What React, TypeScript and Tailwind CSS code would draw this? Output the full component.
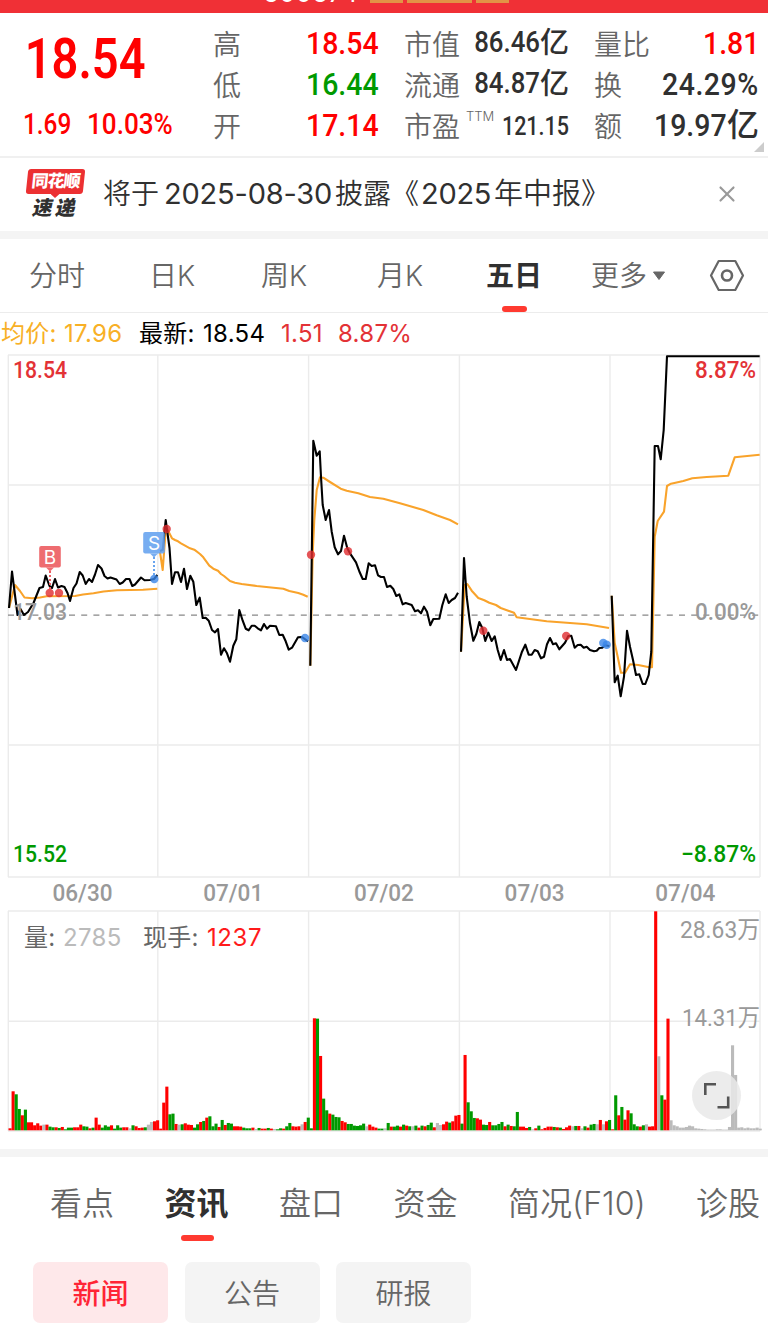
import { X } from 'lucide-react'
import clsx from 'clsx'

type LabelProps = {
  x: number
  y: number
  width: number
  fill: string
  children: string
  weight?: number
}

const GRID_X = [8.3, 157.8, 308.6, 459.4, 610, 760]

// One price line and one average line per trading day
const PRICE_LINES = [
  '9,608 12,571.5 17.5,615 20.5,609 24,615 28,612 33.5,603 39.5,588 43,587 45.7,575.5 49.5,586 52,588 55,579 58,587.5 61.5,586 64.5,587 67.5,593 70,601 73.5,588 76.5,583.5 79.7,572 82.7,575.5 85.7,584 89,579 92,582 95,574.5 98,565 101.5,568.5 104.5,576 107.5,578.5 110.5,577.5 116.5,579.5 119.7,584 122.7,582.5 126,579 129.5,579 132.3,586 135,584.5 141,577.5 144.5,580.3 150,580 154,579 157.3,575',
  '160,551 162.7,550 165.7,520 169.5,548 172,584 175,572.3 178,572.3 181,582 184,568.7 187,589 190.3,575.7 193.3,581.7 196.3,605 199.7,597.7 202.7,618 205.7,617.7 208.7,620.7 212,630 215,632.3 218,629 221,654.7 224,648.3 227,653.3 230,661.7 233.3,645.7 236.3,639.3 239.3,610 242.7,620.7 245.7,628.7 248.7,630.3 251.7,625.7 254.7,625.7 257.7,628.3 261,630.3 264,624 267,628.7 270,625.7 276,626.3 279.3,635 282.7,634.7 285.7,641.3 288.7,649.7 292,647.7 298,637.3 302,637 308,641.3',
  '310.3,665.7 313.3,440.7 316.7,455.7 319.7,451.3 321,476.7 322.7,505 325.7,520 329,510 331.7,531.7 334.7,547.3 338,554.3 341,551 344,535.7 347.3,548.3 350,553.3 356,562.3 359.7,572.3 362.7,579 365.7,579 368.7,563.3 371.7,566 375,565.3 378,575.3 381,577 384,577 387,587 390.3,585.7 393.3,589 396.3,596 399.3,594.3 402.7,604.3 405.7,603 411.7,605 415,611.3 418,610.3 421,613.3 424,606.7 427,611.7 430.3,625.3 433.3,619 439.3,618.7 442.3,605.3 445.7,594.3 448.7,603 451.7,600 455,598 458,592.7',
  '461,651.7 464,558 466.7,596.7 470,623.3 473.3,640.7 476.3,634 479.3,622 482.3,628 485.3,641 488.3,632.7 491.7,641 494.7,636.3 497.7,650 500.7,660 504,650 507,660 510,659 516,670 522,651.7 525.3,644.7 528.7,654.7 531.7,654.7 534.7,650 537.7,651.3 541,658.3 544,656.7 547,644.3 550,638 553,644.3 556,643.3 559.3,649.3 565,642.7 568.3,636 571.3,635.7 574.7,647.7 577.7,645 580.7,644.7 583.7,647.7 586.7,646.7 590,650 594,651.3 596.7,650.7 599.3,648 602.3,647.7 605,645.3 609.3,646',
  '611.7,595.7 614.7,682.3 617.7,675.7 620.7,696.3 624,676.7 627,630.7 630,646.7 633,660 636,675 639.3,674.3 642.7,684 645.3,684 648.7,675 651.3,651.7 654.7,446 658,446 660.7,459.3 663.7,430 667,356.3 759.7,356.3',
]

const AVERAGE_LINES = [
  '9,608 15,585 20,591 24.5,597.5 32,598.3 40,597.5 46.7,596.3 75,596 83,594.5 93.5,593.3 103.5,591.5 117,590.3 143,589.7 157.3,588.7',
  '160,552 162.7,570 165.7,530 167.7,530 172,538.3 175,540 178,541.3 181,543.3 190,548.3 194.3,549.7 200,554 203.3,557.3 209.3,565.7 213.3,568.7 218,570.7 221,574 224,576 230,581 235,582.7 241.7,584 256.7,586 283.3,588.7 289.3,591 298.3,593 303.3,594.7 307.7,596.7',
  '310.3,665.7 312.7,553 314.3,520 316.7,490 320,477.3 323.3,477.7 330,482 340.7,488.7 346.7,490.7 358.3,493.3 370,497 383.3,498.7 400,503.3 423.3,510 436.7,515.3 450,520 458,524.3',
  '461,651.7 464.7,585 467.3,584 471.7,590.7 478.3,598 484.3,600.3 489.3,602.7 496,605 500.7,608 514,612.7 516.7,617.3 546.7,621.3 586.7,624.3 609,628',
  '611.7,595.7 614.7,643 618,658.3 621,672.7 625,672.7 630,664.3 638.3,665 649.3,667.3 652,667.3 654.7,536.7 657.7,521 664,511.7 667,486 671,483.7 683.3,481 692.3,478.3 706.7,477 728.3,475.7 734.7,457.3 759.7,454.7',
]

const BUY_DOTS = [[49.7, 593], [59, 593], [166.7, 529], [311, 554.7], [348, 551.3], [483.3, 630.7], [566.2, 636]]
const SELL_DOTS = [[154.3, 579], [305, 638], [603.3, 643], [606.7, 644.8]]

// 49 five-minute bars a day: r = up, g = down, n = flat, followed by the volume
const VOLUMES = [
  'r6 r117 g108 g64 r45 g62 r24 r24 r15 r21 r14 n17 r17 g11 g9 r9 g7 r10 g3 g8 g8 r9 r9 r17 g12 g11 r6 g8 r38 r17 g8 g15 g11 r15 g5 g15 g8 r9 r9 n6 g15 r12 r7 r8 g9 n17 n25 r27 r30',
  'r5 r83 r131 g48 g50 r19 n17 g18 r21 r17 r16 g8 g18 r25 g28 r38 g42 g12 g20 r10 g31 r16 g22 g20 r12 r12 r11 g8 g6 g6 r8 n4 g7 r5 r5 g7 r5 n4 g3 g6 r5 g12 g22 r12 r11 r12 n18 r25 g38',
  'g6 r336 g335 r223 g95 g60 r50 g47 g40 g39 r28 r24 g19 g19 g14 g13 g15 g20 n12 r17 r11 r8 g5 g5 n6 g22 r11 g11 g14 r11 g17 r14 g12 n12 g14 r8 g14 r12 g16 g23 r9 n22 n16 r18 r26 g23 r27 r44 r46',
  'g20 r226 g84 g57 g37 r36 r32 g17 g16 r25 g15 g15 g19 g25 r12 g17 r13 g12 g55 r11 r11 r7 g10 n3 r6 g14 r3 r7 r11 r11 g10 r9 g8 r4 r9 r14 n12 g13 r13 n6 g12 r8 g17 g19 n18 r31 n18 r27 g31',
  'r3 g105 r45 g70 r32 r60 g51 g18 g12 r11 g15 n18 r11 r12 r657 n222 g105 r92 r335 n30 n15 n12 n8 n8 n10 n14 n12 n6 n5 n4 n3 n2 n2 n2 n3 n3 n2 n2 n10 n255 n166 n8 n9 n6 n8 n6 n6 n8 n5',
]

const BAR_COLORS: Record<string, string> = { r: '#ff0000', g: '#009900', n: '#bbbbbb' }

const KLINE_TABS = [
  { label: '分时', className: 'w-[120px]' },
  { label: '日K', className: 'w-[112px]' },
  { label: '周K', className: 'w-[116px]' },
  { label: '月K', className: 'w-[109px]' },
  { label: '五日', className: 'w-[105px]', active: true },
]

const INFO_TABS = ['看点', '资讯', '盘口', '资金', '简况(F10)', '诊股']
const NEWS_TYPES = ['新闻', '公告', '研报']

export default function App() {
  return (
    <div className="w-[768px] h-[1336px] overflow-hidden bg-white flex flex-col font-['Inter','Noto_Sans_CJK_SC',sans-serif] text-[#666]">
      <TopBar />
      <QuoteSummary />
      <NoticeBar />
      <div className="h-2 shrink-0 bg-[#f4f4f4]" />
      <KlineTabs />
      <div className="h-[41px] shrink-0 flex items-center pl-px text-[24px] tracking-[0.3px] whitespace-nowrap text-[#e33236]">
        <span className="w-[63px] text-[#f8b026]">均价:</span>
        <span className="w-[75px] text-[#f8b026]">17.96</span>
        <span className="w-[64px] text-black">最新:</span>
        <span className="w-[78px] text-black">18.54</span>
        <span className="w-[57px]">1.51</span>
        <span>8.87%</span>
      </div>
      <PriceChart />
      <VolumeChart />
      <div className="h-2 shrink-0 bg-[#f4f4f4]" />
      <InfoSection />
    </div>
  )
}

function TopBar() {
  return (
    <div className="h-[13px] shrink-0 bg-[#f03036] flex items-start pl-[263px] overflow-hidden">
      <span className="w-[107px] -mt-[20px] text-[26px] leading-[26px] text-white">600674</span>
      <div className="flex gap-1">
        <div className="w-[33px] h-[3px] bg-[#e29446]" />
        <div className="w-[65px] h-[3px] bg-[#e29446]" />
        <div className="w-[33px] h-[3px] bg-[#e29446]" />
      </div>
    </div>
  )
}

function QuoteSummary() {
  return (
    <div className="relative h-[145px] shrink-0 border-b-2 border-[#f0f0f0] flex pt-[11px] text-[28px] font-[350] whitespace-nowrap">
      <div className="w-[213px] pl-[23px] font-['Roboto',sans-serif] text-[#ff0000]">
        <div className="h-[73px] pl-[2px] text-[55px] leading-[71px] font-semibold origin-left scale-x-[0.855]">18.54</div>
        <div className="flex h-[56px] items-center text-[29px] font-medium">
          <span className="w-[64px] origin-left scale-x-[0.84]">1.69</span>
          <span className="origin-left scale-x-[0.9]">10.03%</span>
        </div>
      </div>

      <div className="w-[166px] mr-[25px]">
        <QuoteRow label="高" value="18.54" className="text-[#ff0000] text-[32px]" />
        <QuoteRow label="低" value="16.44" className="text-[#009900] text-[32px]" />
        <QuoteRow label="开" value="17.14" className="text-[#ff0000] text-[32px]" />
      </div>

      <div className="w-[165px] mr-[25px]">
        <QuoteRow label="市值" value="86.46" unit="亿" className="text-[#303030] text-[29px]" />
        <QuoteRow label="流通" value="84.87" unit="亿" className="text-[#303030] text-[29px]" />
        <div className="h-[41px] flex items-center pt-px">
          <span>市盈</span>
          <span className="w-[30px] pl-[6px] pb-[22px] text-[13px] leading-none">TTM</span>
          <div className="flex-1 w-0 flex justify-end font-['Roboto',sans-serif] font-medium text-[25px] text-[#303030]">
            <span className="origin-right scale-x-[0.86]">121.15</span>
          </div>
        </div>
      </div>

      <div className="w-[165px]">
        <QuoteRow label="量比" value="1.81" className="text-[#ff0000] text-[32px]" />
        <QuoteRow label="换" value="24.29%" className="text-[#303030] text-[32px] tracking-[0.6px]" />
        <QuoteRow label="额" value="19.97" unit="亿" className="text-[#303030] text-[32px]" />
      </div>

      <div className="absolute right-[4px] bottom-[4px] w-[10px] h-[10px] bg-[#ccc] [clip-path:polygon(100%_0,100%_100%,0_100%)]" />
    </div>
  )
}

function QuoteRow({ label, value, unit, className }: { label: string; value: string; unit?: string; className: string }) {
  return (
    <div className="h-[41px] flex items-center">
      <span>{label}</span>
      <div className={clsx('flex-1 w-0 flex items-center justify-end font-medium pb-[4px]', className)}>
        <span className="font-['Roboto',sans-serif] origin-right scale-x-[0.89]">{value}</span>
        {unit && <span className="leading-none">{unit}</span>}
      </div>
    </div>
  )
}

function NoticeBar() {
  return (
    <div className="h-[73px] shrink-0 flex items-center pb-px text-[29px] text-[#303030] whitespace-nowrap">
      <div className="w-[103px] pl-[25px]">
        <div className="w-[60px] flex flex-col items-center font-black">
          <div className="w-[57px] h-[25px] -skew-x-6 rounded-[3px] bg-[#ec3032] text-white text-[17px] leading-[24px] tracking-[-1px] text-center">
            同花顺
          </div>
          <div className="w-[9px] h-[4px] bg-[#ec3032] [clip-path:polygon(0_0,100%_0,50%_100%)]" />
          <div className="-skew-x-12 text-[20px] leading-[21px] tracking-[3px] pl-[2px]">速递</div>
        </div>
      </div>
      <span className="w-[61px] text-[28px] font-[350]">将于</span>
      <span className="w-[171px] tracking-[-0.2px]">2025-08-30</span>
      <span className="w-[86px] text-[28px] font-[350]">披露《</span>
      <span className="w-[73px] tracking-[-0.3px]">2025</span>
      <span className="flex-1 text-[29px] font-[350]">年中报》</span>
      <X size={26} strokeWidth={2} className="mr-[28px] text-[#999]" />
    </div>
  )
}

function KlineTabs() {
  return (
    <div className="h-[74px] shrink-0 border-b border-[#ececec] flex items-center pl-[29px] text-[28px] font-[350] whitespace-nowrap">
      {KLINE_TABS.map((tab) => (
        <div key={tab.label} className={clsx('h-full flex items-center', tab.className)}>
          <div className={clsx('relative h-full flex items-center pt-px', tab.active && 'font-bold text-[#303030]')}>
            {tab.label}
            {tab.active && (
              <div className="absolute bottom-0 left-[16px] w-[25px] h-[6px] rounded-full bg-[#ff3a30]" />
            )}
          </div>
        </div>
      ))}
      <div className="w-[118px] flex items-center pt-px">
        更多
        <svg width="14" height="10" viewBox="0 0 14 10" className="ml-[5px]">
          <path d="M1.5 1H12.5L7 8.5Z" fill="#666" stroke="#666" strokeLinejoin="round" />
        </svg>
      </div>
      <svg width="36" height="34" viewBox="0 0 36 34" fill="none" stroke="#666" strokeWidth="2.2">
        <path d="M9.7 2H26.3L34 16.5L26.3 31H9.7L2 16.5Z" strokeLinejoin="round" />
        <circle cx="18" cy="16.5" r="5" strokeWidth="2.6" />
      </svg>
    </div>
  )
}

function PriceChart() {
  return (
    <svg width="768" height="556" viewBox="0 354 768 556" className="shrink-0 block">
      <g stroke="#ebebeb" strokeWidth="1.4">
        {GRID_X.map((x) => (
          <line key={x} x1={x} x2={x} y1="355" y2="877" />
        ))}
        {[355, 485, 745, 877].map((y) => (
          <line key={y} x1="8" x2="760" y1={y} y2={y} />
        ))}
      </g>
      <line x1="8" x2="760" y1="615.2" y2="615.2" stroke="#888" strokeWidth="1.2" strokeDasharray="6 6.2" />

      <ChartLabel x={13} y={378} width={54} fill="#e33236">18.54</ChartLabel>
      <ChartLabel x={695} y={378} width={61} fill="#e33236">8.87%</ChartLabel>

      <g fill="none" strokeWidth="2.1" strokeLinejoin="round">
        {AVERAGE_LINES.map((points) => (
          <polyline key={points} points={points} stroke="#f9a32b" />
        ))}
        {PRICE_LINES.map((points) => (
          <polyline key={points} points={points} stroke="#000" />
        ))}
      </g>

      <ChartLabel x={13} y={620} width={54} fill="#999999">17.03</ChartLabel>
      <ChartLabel x={695} y={620} width={61} fill="#999999">0.00%</ChartLabel>
      <ChartLabel x={13} y={862} width={54} fill="#009900">15.52</ChartLabel>
      <ChartLabel x={681} y={862} width={75} fill="#009900">−8.87%</ChartLabel>

      {BUY_DOTS.map(([x, y]) => (
        <circle key={x} cx={x} cy={y} r="4.2" fill="#e02c30" fillOpacity="0.8" />
      ))}
      {SELL_DOTS.map(([x, y]) => (
        <circle key={x} cx={x} cy={y} r="4.2" fill="#3a86e8" fillOpacity="0.8" />
      ))}
      <TradeMarker x={50} y={546} bottom={590} label="B" color="#ec5c60" />
      <TradeMarker x={154} y={532} bottom={576} label="S" color="#68a4ef" />

      {['06/30', '07/01', '07/02', '07/03', '07/04'].map((date, i) => (
        <ChartLabel key={date} x={52.5 + i * 150.7} y={901} width={60} fill="#999999">{date}</ChartLabel>
      ))}
    </svg>
  )
}

function TradeMarker({ x, y, bottom, label, color }: { x: number; y: number; bottom: number; label: string; color: string }) {
  return (
    <g>
      <line x1={x} x2={x} y1={y + 25} y2={bottom} stroke={color} strokeWidth="2" strokeDasharray="2 2" />
      <g fill={color} fillOpacity="0.9">
        <rect x={x - 10.8} y={y} width="21.6" height="21.6" rx="2" />
        <path d={`M${x - 4} ${y + 21.6}H${x + 4}L${x} ${y + 25.5}Z`} />
      </g>
      <text x={x} y={y + 17.8} textAnchor="middle" fontSize="19" fill="#fff" className="font-['Inter',sans-serif]">{label}</text>
    </g>
  )
}

function ChartLabel({ x, y, width, fill, children, weight = 500 }: LabelProps) {
  return (
    <text
      x={x}
      y={y}
      fill={fill}
      fontSize="24"
      fontWeight={weight}
      textLength={width}
      lengthAdjust="spacingAndGlyphs"
      className="font-['Roboto','Noto_Sans_CJK_SC',sans-serif]"
    >
      {children}
    </text>
  )
}

function VolumeChart() {
  return (
    <div className="relative h-[239px] shrink-0">
      <svg width="768" height="239" viewBox="0 910 768 239" className="block">
        <g stroke="#ebebeb" strokeWidth="1.4">
          {GRID_X.map((x) => (
            <line key={x} x1={x} x2={x} y1="911" y2="1131" />
          ))}
          {[911, 1021.3, 1131].map((y) => (
            <line key={y} x1="8" x2="760" y1={y} y2={y} />
          ))}
        </g>
        {VOLUMES.map((day, d) =>
          day.split(' ').map((bar, i) => {
            const height = Number(bar.slice(1)) / 3
            return (
              <rect
                key={`${d}-${i}`}
                x={8.5 + (d * 49 + i) * 3.0745}
                y={1130.3 - height}
                width="3.1"
                height={height}
                fill={BAR_COLORS[bar[0]]}
              />
            )
          })
        )}
        <ChartLabel x={680} y={937.5} width={80} fill="#999999" weight={400}>28.63万</ChartLabel>
        <ChartLabel x={682} y={1026} width={78} fill="#999999" weight={400}>14.31万</ChartLabel>
      </svg>

      <div className="absolute left-[24px] top-[10px] flex text-[24px] tracking-[0.3px] whitespace-nowrap">
        <span className="w-[39px]">量:</span>
        <span className="w-[80px] text-[#bbb]">2785</span>
        <span className="w-[64px]">现手:</span>
        <span className="tracking-[0.6px] text-[#ff1a1a]">1237</span>
      </div>

      <button type="button" className="absolute left-[692px] top-[161px] w-[49px] h-[49px] rounded-full bg-[#e9e9e9]/85">
        <svg width="49" height="49" viewBox="0 0 49 49" fill="none" stroke="#555" strokeWidth="2.6">
          <path d="M13.3 24V13.3H24M25.5 36.2H36.2V25.5" />
        </svg>
      </button>
    </div>
  )
}

function InfoSection() {
  return (
    <div className="flex-1">
      <div className="h-[86px] flex gap-[50.5px] pl-[50px] text-[32px] leading-[94px] font-[350] whitespace-nowrap">
        {INFO_TABS.map((tab) => (
          <div key={tab} className={clsx('relative shrink-0', tab === '资讯' && 'font-bold text-[#303030]')}>
            {tab}
            {tab === '资讯' && (
              <div className="absolute bottom-[2px] left-[16px] w-[33px] h-[6px] rounded-full bg-[#ff3a30]" />
            )}
          </div>
        ))}
      </div>
      <div className="flex gap-[16.5px] pl-[33px] pt-[19px]">
        {NEWS_TYPES.map((type) => (
          <button
            key={type}
            type="button"
            className={clsx(
              'w-[135px] h-[61px] pt-[3px] rounded-[7px] text-[28px]',
              type === '新闻' ? 'bg-[#fee8ea] text-[#ff2436] font-medium' : 'bg-[#f4f4f4] font-[350]'
            )}
          >
            {type}
          </button>
        ))}
      </div>
    </div>
  )
}
